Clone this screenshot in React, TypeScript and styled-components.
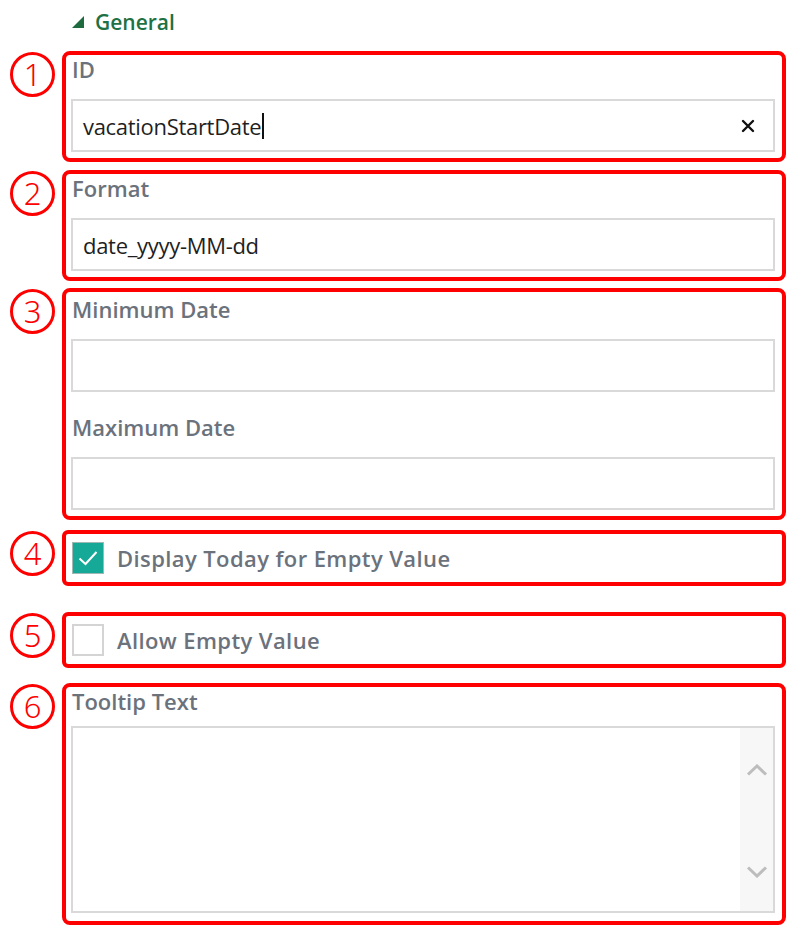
import styled, { createGlobalStyle } from "styled-components";

const GlobalStyle = createGlobalStyle`
  html, body {
    margin: 0;
    padding: 0;
    background: #ffffff;
  }
  body {
    font-family: "Open Sans", "Noto Sans", sans-serif;
  }
`;

type Section = {
  no: string;
  gap: number;
  children: React.ReactNode;
};

const App = () => {
  const sections: Section[] = [
    {
      no: "1",
      gap: 8,
      children: (
        <Box>
          <Label>ID</Label>
          <Input>
            <Value>vacationStartDate</Value>
            <Caret />
            <Clear>
              <svg width="14" height="14" viewBox="0 0 14 14">
                <path d="M2 2 L12 12 M12 2 L2 12" stroke="#111" strokeWidth="2.4" strokeLinecap="round" />
              </svg>
            </Clear>
          </Input>
        </Box>
      ),
    },
    {
      no: "2",
      gap: 8,
      children: (
        <Box>
          <Label>Format</Label>
          <Input>
            <Value>date_yyyy-MM-dd</Value>
          </Input>
        </Box>
      ),
    },
    {
      no: "3",
      gap: 7,
      children: (
        <Box>
          <Label $top={3}>Minimum Date</Label>
          <Input />
          <Label $top={22}>Maximum Date</Label>
          <Input />
        </Box>
      ),
    },
    {
      no: "4",
      gap: 10,
      children: (
        <CheckBox>
          <Check $checked>
            <svg width="22" height="18" viewBox="0 0 22 18">
              <path d="M2.5 9.5 L8.5 15 L19.5 3" fill="none" stroke="#fff" strokeWidth="2" />
            </svg>
          </Check>
          <CheckLabel>Display Today for Empty Value</CheckLabel>
        </CheckBox>
      ),
    },
    {
      no: "5",
      gap: 26,
      children: (
        <CheckBox>
          <Check />
          <CheckLabel>Allow Empty Value</CheckLabel>
        </CheckBox>
      ),
    },
    {
      no: "6",
      gap: 15,
      children: (
        <Box $bottom={8}>
          <Label $margin={12}>Tooltip Text</Label>
          <TextArea>
            <TextContent />
            <ScrollTrack>
              <svg width="22" height="12" viewBox="0 0 22 12">
                <path d="M2 10.5 L11 2 L20 10.5" fill="none" stroke="#bdbdbd" strokeWidth="3" />
              </svg>
              <svg width="22" height="12" viewBox="0 0 22 12">
                <path d="M2 1.5 L11 10 L20 1.5" fill="none" stroke="#bdbdbd" strokeWidth="3" />
              </svg>
            </ScrollTrack>
          </TextArea>
        </Box>
      ),
    },
  ];

  return (
    <>
      <GlobalStyle />
      <Page>
        <Header>
          <svg width="12" height="12" viewBox="0 0 12 12">
            <polygon points="0,12 12,0 12,12" fill="#1e6b40" />
          </svg>
          <Title>General</Title>
        </Header>
        {sections.map((s) => (
          <Row key={s.no} $gap={s.gap}>
            <Marker>{s.no}</Marker>
            {s.children}
          </Row>
        ))}
      </Page>
    </>
  );
};

export default App;

const Page = styled.div`
  width: 796px;
  padding: 0 10px 0 10px;
  box-sizing: border-box;
`;

const Header = styled.div`
  height: 43px;
  display: flex;
  align-items: center;
  gap: 11px;
  padding-left: 62px;
  box-sizing: border-box;
`;

const Title = styled.span`
  font-size: 21px;
  font-weight: 600;
  color: #1e7145;
  line-height: 26px;
`;

const Row = styled.div<{ $gap: number }>`
  display: flex;
  align-items: flex-start;
  margin-top: ${({ $gap }) => $gap}px;
`;

const Marker = styled.div`
  flex: 0 0 39px;
  width: 39px;
  height: 39px;
  margin-right: 7px;
  margin-top: 1px;
  border: 3px solid #ff0000;
  border-radius: 50%;
  display: flex;
  align-items: center;
  justify-content: center;
  font-family: "Noto Sans", sans-serif;
  font-weight: 300;
  font-size: 31px;
  line-height: 1;
  color: #ff0000;
`;

const Box = styled.div<{ $bottom?: number }>`
  flex: 1;
  border: 4px solid #ff0000;
  border-radius: 8px;
  padding: 1px 7px ${({ $bottom }) => $bottom ?? 6}px 5px;
  display: flex;
  flex-direction: column;
`;

const Label = styled.div<{ $top?: number; $margin?: number }>`
  font-size: 22px;
  font-weight: 600;
  line-height: 26px;
  color: #6b727c;
  padding-left: 1px;
  margin-top: ${({ $top }) => $top ?? 0}px;
  margin-bottom: ${({ $margin }) => $margin ?? 17}px;
`;

const Input = styled.div`
  height: 53px;
  box-sizing: border-box;
  border: 2px solid #d9d9d9;
  display: flex;
  align-items: center;
  padding: 0 18px 0 10px;
`;

const Value = styled.span`
  font-size: 22px;
  color: #1f1f1f;
  letter-spacing: -0.3px;
`;

const Caret = styled.span`
  width: 1.5px;
  height: 26px;
  background: #111;
  margin-left: 1px;
`;

const Clear = styled.span`
  margin-left: auto;
  display: flex;
`;

const CheckBox = styled.div`
  flex: 1;
  border: 4px solid #ff0000;
  border-radius: 6px;
  padding: 8px 6px 8px 6px;
  display: flex;
  align-items: center;
  gap: 13px;
`;

const Check = styled.span<{ $checked?: boolean }>`
  width: 32px;
  height: 32px;
  box-sizing: border-box;
  display: flex;
  align-items: center;
  justify-content: center;
  background: ${({ $checked }) => ($checked ? "#17a998" : "#ffffff")};
  border: ${({ $checked }) => ($checked ? "1px solid #9fb8b4" : "2px solid #d4d4d4")};
`;

const CheckLabel = styled.span`
  font-size: 22px;
  font-weight: 600;
  color: #6b727c;
  line-height: 26px;
  letter-spacing: 0.4px;
`;

const TextArea = styled.div`
  height: 187px;
  box-sizing: border-box;
  border: 2px solid #d9d9d9;
  display: flex;
`;

const TextContent = styled.div`
  flex: 1;
`;

const ScrollTrack = styled.div`
  width: 33px;
  background: #f7f7f7;
  display: flex;
  flex-direction: column;
  align-items: center;
  justify-content: space-between;
  padding: 36px 0 33px;
`;
